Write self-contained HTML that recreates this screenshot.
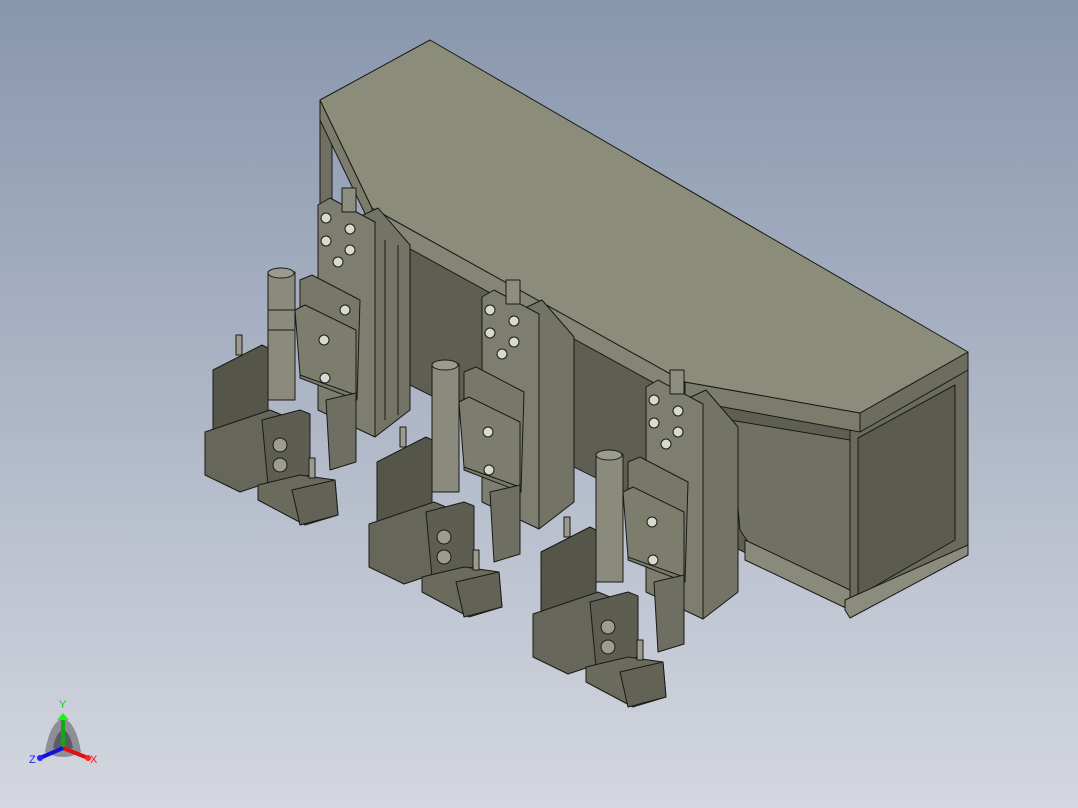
<!DOCTYPE html>
<html><head><meta charset="utf-8"><style>
html,body{margin:0;padding:0;width:1078px;height:808px;overflow:hidden}
body{background:linear-gradient(180deg,#8896ad 0%,#aab3c4 45%,#d4d7df 100%)}
svg{position:absolute;left:0;top:0}
</style></head><body>
<svg width="1078" height="808" viewBox="0 0 1078 808" stroke="#1a1a16" stroke-width="1" stroke-linejoin="round">
<!-- back structure -->
<polygon points="320,118 332,112 332,290 320,296" fill="#6f6f62"/>
<polygon points="400,240 850,430 850,600 760,560 400,380" fill="#5e5e52"/>
<polygon points="730,420 850,440 850,590 760,560 740,530" fill="#707064"/>
<polygon points="745,540 850,590 850,610 745,560" fill="#8a8a7c"/>
<!-- right end box -->
<polygon points="850,430 968,365 968,550 850,615" fill="#6a6a5e"/>
<polygon points="858,438 955,385 955,540 858,596" fill="#5b5b50"/>
<polygon points="845,600 968,545 968,555 850,618 845,610" fill="#8b8b7e"/>
<!-- top plate -->
<polygon points="320,100 320,120 372,228 372,208" fill="#7c7c6c"/>
<polygon points="372,208 372,228 685,400 685,382" fill="#858575"/>
<polygon points="685,382 685,400 860,432 860,413" fill="#7c7c6c"/>
<polygon points="860,413 860,432 968,370 968,352" fill="#6c6c5f"/>
<polygon points="320,100 430,40 968,352 860,413 685,382 372,208" fill="#8c8c7b"/>
<!-- module template -->
<g id="m1">
 <polygon points="363,215 378,208 410,245 410,410 375,437 363,430" fill="#737366"/>
 <line x1="385" y1="240" x2="385" y2="420"/><line x1="398" y1="245" x2="398" y2="415"/>
 <polygon points="318,205 330,198 375,222 375,437 318,410" fill="#7e7e70"/>
 <rect x="342" y="188" width="14" height="24" fill="#8d8d80"/>
 <circle cx="326" cy="218" r="5" fill="#d9d9d0"/><circle cx="350" cy="229" r="5" fill="#d9d9d0"/>
 <circle cx="326" cy="241" r="5" fill="#d9d9d0"/><circle cx="350" cy="250" r="5" fill="#d9d9d0"/>
 <circle cx="338" cy="262" r="5" fill="#d9d9d0"/>
 <polygon points="300,280 312,275 360,300 357,400 300,378" fill="#787869"/>
 <polygon points="295,310 305,305 356,330 356,395 300,375" fill="#7d7d6e"/>
 <circle cx="324" cy="340" r="5" fill="#d9d9d0"/><circle cx="325" cy="378" r="5" fill="#d9d9d0"/>
 <circle cx="345" cy="310" r="5" fill="#d9d9d0"/>
 <rect x="268" y="272" width="27" height="128" fill="#8a8a7d"/>
 <ellipse cx="281" cy="273" rx="13" ry="5" fill="#9a9a8d"/>
 <line x1="268" y1="310" x2="295" y2="310"/><line x1="268" y1="330" x2="295" y2="330"/>
 <polygon points="326,400 356,393 356,462 330,470" fill="#6e6e62"/>
 <polygon points="213,370 262,345 268,348 268,430 228,442 213,437" fill="#555549"/>
 <rect x="236" y="335" width="6" height="20" fill="#9a9a8d"/>
 <polygon points="205,432 270,410 282,415 282,478 240,492 205,475" fill="#66665a"/>
 <polygon points="262,420 300,410 310,414 310,475 268,485" fill="#5d5d51"/>
 <circle cx="280" cy="445" r="7" fill="#9c9c8f"/><circle cx="280" cy="465" r="7" fill="#9c9c8f"/>
 <polygon points="258,485 300,475 335,480 338,515 305,525 258,500" fill="#6a6a5d"/>
 <polygon points="292,490 335,480 338,515 300,525" fill="#626256"/>
 <rect x="309" y="458" width="6" height="20" fill="#9a9a8d"/>
</g>
<g transform="translate(164,92)">
 <polygon points="363,215 378,208 410,245 410,410 375,437 363,430" fill="#737366"/>
 <polygon points="318,205 330,198 375,222 375,437 318,410" fill="#7e7e70"/>
 <rect x="342" y="188" width="14" height="24" fill="#8d8d80"/>
 <circle cx="326" cy="218" r="5" fill="#d9d9d0"/><circle cx="350" cy="229" r="5" fill="#d9d9d0"/>
 <circle cx="326" cy="241" r="5" fill="#d9d9d0"/><circle cx="350" cy="250" r="5" fill="#d9d9d0"/>
 <circle cx="338" cy="262" r="5" fill="#d9d9d0"/>
 <polygon points="300,280 312,275 360,300 357,400 300,378" fill="#787869"/>
 <polygon points="295,310 305,305 356,330 356,395 300,375" fill="#7d7d6e"/>
 <circle cx="324" cy="340" r="5" fill="#d9d9d0"/><circle cx="325" cy="378" r="5" fill="#d9d9d0"/>
 <rect x="268" y="272" width="27" height="128" fill="#8a8a7d"/>
 <ellipse cx="281" cy="273" rx="13" ry="5" fill="#9a9a8d"/>
 <polygon points="326,400 356,393 356,462 330,470" fill="#6e6e62"/>
 <polygon points="213,370 262,345 268,348 268,430 228,442 213,437" fill="#555549"/>
 <rect x="236" y="335" width="6" height="20" fill="#9a9a8d"/>
 <polygon points="205,432 270,410 282,415 282,478 240,492 205,475" fill="#66665a"/>
 <polygon points="262,420 300,410 310,414 310,475 268,485" fill="#5d5d51"/>
 <circle cx="280" cy="445" r="7" fill="#9c9c8f"/><circle cx="280" cy="465" r="7" fill="#9c9c8f"/>
 <polygon points="258,485 300,475 335,480 338,515 305,525 258,500" fill="#6a6a5d"/>
 <polygon points="292,490 335,480 338,515 300,525" fill="#626256"/>
 <rect x="309" y="458" width="6" height="20" fill="#9a9a8d"/>
</g>
<g transform="translate(328,182)">
 <polygon points="363,215 378,208 410,245 410,410 375,437 363,430" fill="#737366"/>
 <polygon points="318,205 330,198 375,222 375,437 318,410" fill="#7e7e70"/>
 <rect x="342" y="188" width="14" height="24" fill="#8d8d80"/>
 <circle cx="326" cy="218" r="5" fill="#d9d9d0"/><circle cx="350" cy="229" r="5" fill="#d9d9d0"/>
 <circle cx="326" cy="241" r="5" fill="#d9d9d0"/><circle cx="350" cy="250" r="5" fill="#d9d9d0"/>
 <circle cx="338" cy="262" r="5" fill="#d9d9d0"/>
 <polygon points="300,280 312,275 360,300 357,400 300,378" fill="#787869"/>
 <polygon points="295,310 305,305 356,330 356,395 300,375" fill="#7d7d6e"/>
 <circle cx="324" cy="340" r="5" fill="#d9d9d0"/><circle cx="325" cy="378" r="5" fill="#d9d9d0"/>
 <rect x="268" y="272" width="27" height="128" fill="#8a8a7d"/>
 <ellipse cx="281" cy="273" rx="13" ry="5" fill="#9a9a8d"/>
 <polygon points="326,400 356,393 356,462 330,470" fill="#6e6e62"/>
 <polygon points="213,370 262,345 268,348 268,430 228,442 213,437" fill="#555549"/>
 <rect x="236" y="335" width="6" height="20" fill="#9a9a8d"/>
 <polygon points="205,432 270,410 282,415 282,478 240,492 205,475" fill="#66665a"/>
 <polygon points="262,420 300,410 310,414 310,475 268,485" fill="#5d5d51"/>
 <circle cx="280" cy="445" r="7" fill="#9c9c8f"/><circle cx="280" cy="465" r="7" fill="#9c9c8f"/>
 <polygon points="258,485 300,475 335,480 338,515 305,525 258,500" fill="#6a6a5d"/>
 <polygon points="292,490 335,480 338,515 300,525" fill="#626256"/>
 <rect x="309" y="458" width="6" height="20" fill="#9a9a8d"/>
</g>
<!-- triad -->
<g stroke="none">
 <path d="M45,752 Q50,722 63,718 Q76,722 81,752 Q63,762 45,752Z" fill="#8c9096"/>
 <path d="M53,748 Q56,732 63,730 Q70,732 73,748 Q63,752 53,748Z" fill="#5a5e64"/>
 <rect x="61" y="718" width="4" height="30" fill="#11aa11"/>
 <polygon points="57,720 63,713 69,720" fill="#22ee22"/>
 <line x1="63" y1="748" x2="88" y2="758" stroke="#dd1111" stroke-width="4"/>
 <circle cx="88" cy="758" r="3" fill="#ff2222"/>
 <line x1="63" y1="748" x2="40" y2="758" stroke="#1111dd" stroke-width="4"/>
 <circle cx="40" cy="758" r="3" fill="#2222ff"/>
 <text x="59" y="708" font-family="Liberation Sans,sans-serif" font-size="11" fill="#22cc22">Y</text>
 <text x="90" y="763" font-family="Liberation Sans,sans-serif" font-size="11" fill="#ee2222">X</text>
 <text x="29" y="763" font-family="Liberation Sans,sans-serif" font-size="11" fill="#2222ee">Z</text>
</g>
</svg>
</body></html>
